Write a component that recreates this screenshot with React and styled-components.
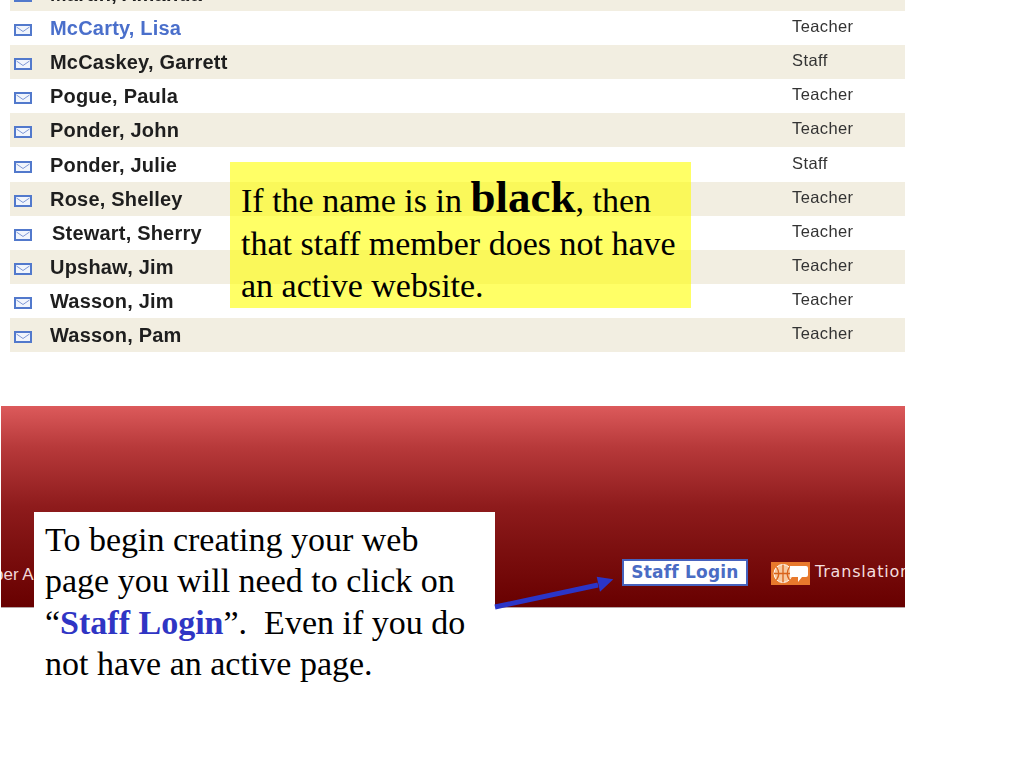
import React from "react";
import styled, { createGlobalStyle } from "styled-components";

const Global = createGlobalStyle`
  html, body { margin: 0; padding: 0; background: #fff; }
  #root { width: 1024px; height: 768px; overflow: hidden; }
`;
const Page = styled.div`
  position: relative;
  width: 1024px;
  height: 768px;
  background: #fff;
  overflow: hidden;
`;
const Directory = styled.div`
  display: flex;
  flex-direction: column;
  margin: -23px 0 0 10px;
  width: 895px;
  filter: blur(0.35px);
`;
const Row = styled.div`
  display: flex;
  align-items: center;
  height: 34.1px;
  background: ${(p) => (p.$alt ? "#f2eee1" : "#fff")};
  overflow: hidden;
`;
const Envelope = styled.svg`
  flex: none;
  width: 18px;
  height: 12px;
  margin: 4px 0 0 4px;
`;
const Name = styled.span`
  flex: none;
  width: ${(p) => 742 - (p.$shift || 0)}px;
  margin-left: ${(p) => 18 + (p.$shift || 0)}px;
  font: bold 20px/24px "Liberation Sans", Arial, sans-serif;
  letter-spacing: 0.2px;
  color: ${(p) => (p.$link ? "#4a6fcb" : "#1e1e1e")};
  white-space: nowrap;
`;
const Role = styled.span`
  font: 16.5px/20px "Liberation Sans", Arial, sans-serif;
  letter-spacing: 0.4px;
  color: #333;
  margin-top: -4px;
`;
const Band = styled.div`
  display: flex;
  align-items: flex-end;
  box-sizing: border-box;
  margin: 54px 0 0 1px;
  width: 904px;
  height: 202px;
  padding-bottom: 21px;
  background: linear-gradient(#dc5a5b 0%, #b83a3b 20%, #8e1b1c 50%, #7d1010 70%, #680000 100%);
  border-bottom: 1px solid #b9a5a5;
  overflow: hidden;
`;
const FooterLink = styled.span`
  flex: none;
  width: 621px;
  margin-bottom: -1px;
  text-indent: -7px;
  font: 17px/24px "Liberation Sans", Arial, sans-serif;
  color: #f3d9d9;
  white-space: nowrap;
`;
const LoginButton = styled.div`
  flex: none;
  box-sizing: border-box;
  width: 126px;
  height: 27px;
  border: 2px solid #4662bd;
  background: #fff;
  color: #4a6cc4;
  font: bold 17px/23px "DejaVu Sans", Verdana, sans-serif;
  text-align: center;
  letter-spacing: 0.2px;
`;
const Globe = styled.svg`
  flex: none;
  width: 39px;
  height: 23px;
  margin: 0 0 1px 23px;
`;
const Translation = styled.span`
  flex: none;
  margin: 0 0 2px 5px;
  font: 16px/24px "DejaVu Sans", Verdana, sans-serif;
  letter-spacing: 0.8px;
  color: #f3dede;
  white-space: nowrap;
`;
const Callout = styled.div`
  position: absolute;
  box-sizing: border-box;
  font-family: "Liberation Serif", "Times New Roman", serif;
  font-size: 34px;
  color: #000;
`;
const YellowNote = styled(Callout)`
  left: 230px;
  top: 162px;
  width: 461px;
  height: 146px;
  padding: 18px 11px 0;
  line-height: 42.5px;
  background: rgba(255, 255, 0, 0.6);
`;
const WhiteNote = styled(Callout)`
  left: 34px;
  top: 512px;
  width: 461px;
  height: 178px;
  padding: 7px 11px 0;
  line-height: 41.3px;
  background: #fff;
`;
const BigBlack = styled.b`
  font-size: 45px;
  line-height: 32px;
`;
const BlueBold = styled.b`
  color: #2f35c4;
`;
const Arrow = styled.svg`
  position: absolute;
  left: 490px;
  top: 570px;
  width: 130px;
  height: 42px;
`;

const Mail = () => (
  <Envelope viewBox="0 0 18 12">
    <rect x="1" y="1" width="16" height="10" fill="#f1f5fc" stroke="#5279cc" strokeWidth="2" />
    <path d="M2.5 3 L9 7.5 L15.5 3" fill="none" stroke="#7f98d6" strokeWidth="1" />
  </Envelope>
);

const people = [
  ["Martin, Amanda", "", false, 0, true],
  ["McCarty, Lisa", "Teacher", true],
  ["McCaskey, Garrett", "Staff", false, 0, true],
  ["Pogue, Paula", "Teacher"],
  ["Ponder, John", "Teacher", false, 0, true],
  ["Ponder, Julie", "Staff"],
  ["Rose, Shelley", "Teacher", false, 0, true],
  ["Stewart, Sherry", "Teacher", false, 2],
  ["Upshaw, Jim", "Teacher", false, 0, true],
  ["Wasson, Jim", "Teacher"],
  ["Wasson, Pam", "Teacher", false, 0, true],
];

export default function App() {
  return (
    <Page>
      <Global />
      <Directory>
        {people.map(([name, role, link, shift, alt]) => (
          <Row key={name} $alt={alt}>
            <Mail />
            <Name $link={link} $shift={shift}>{name}</Name>
            <Role>{role}</Role>
          </Row>
        ))}
      </Directory>
      <Band>
        <FooterLink>ber Access</FooterLink>
        <LoginButton>Staff Login</LoginButton>
        <Globe viewBox="0 0 39 23">
          <rect width="39" height="23" fill="#e8792c" />
          <circle cx="12" cy="11.5" r="9" fill="#f7c9a0" stroke="#fff" strokeWidth="1" />
          <path d="M12 2.5V20.5M3 11.5H21M5.5 5Q10 11.5 5.5 18M18.5 5Q14 11.5 18.5 18" fill="none" stroke="#d9631b" strokeWidth="1.3" />
          <path d="M19 4H35Q37 4 37 6V13Q37 15 35 15H31L27 20V15H19Z" fill="#fff" />
        </Globe>
        <Translation>Translation</Translation>
      </Band>
      <YellowNote>
        If the name is in <BigBlack>black</BigBlack>, then that staff member does not have an active website.
      </YellowNote>
      <WhiteNote>
        To begin creating your web page you will need to click on “<BlueBold>Staff Login</BlueBold>”.&nbsp; Even if you do not have an active page.
      </WhiteNote>
      <Arrow viewBox="0 0 130 42">
        <path d="M5 37 L108 15" stroke="#2b35c8" strokeWidth="5" fill="none" />
        <path d="M123.3 9.3 L106.7 6.7 L110 21.7 Z" fill="#2b35c8" />
      </Arrow>
    </Page>
  );
}
